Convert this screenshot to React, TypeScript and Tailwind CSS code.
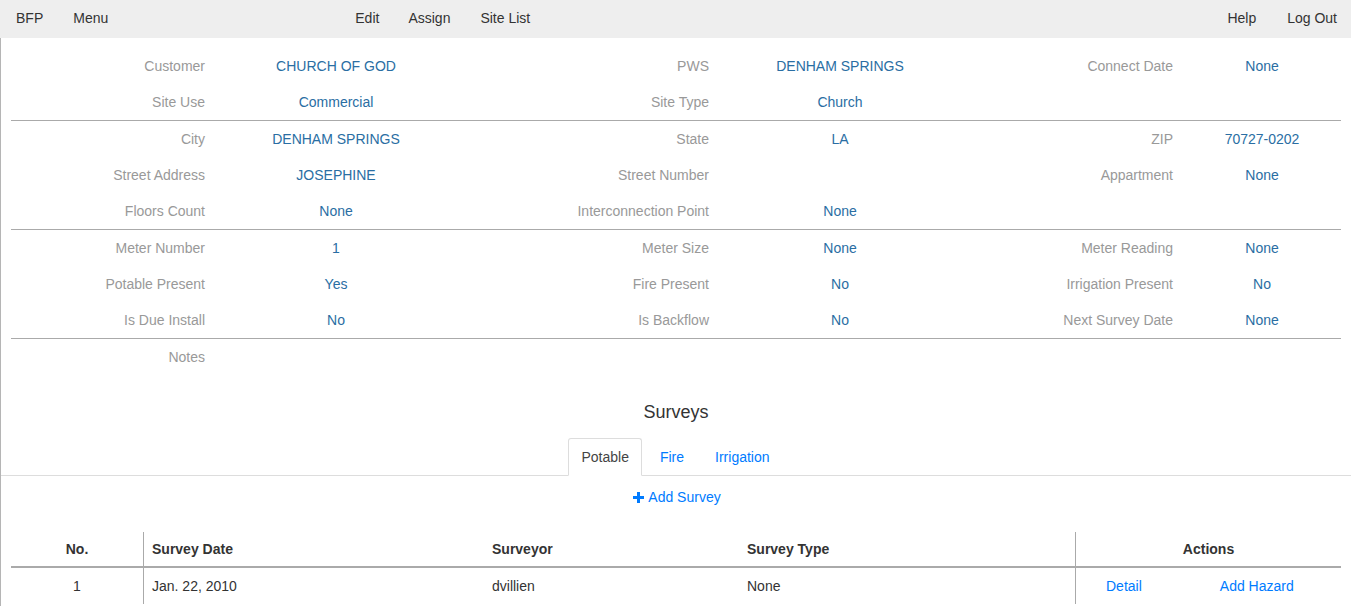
import React from "react";

const sections = [
  [
    ["Customer", "CHURCH OF GOD", "PWS", "DENHAM SPRINGS", "Connect Date", "None"],
    ["Site Use", "Commercial", "Site Type", "Church", "", ""],
  ],
  [
    ["City", "DENHAM SPRINGS", "State", "LA", "ZIP", "70727-0202"],
    ["Street Address", "JOSEPHINE", "Street Number", "", "Appartment", "None"],
    ["Floors Count", "None", "Interconnection Point", "None", "", ""],
  ],
  [
    ["Meter Number", "1", "Meter Size", "None", "Meter Reading", "None"],
    ["Potable Present", "Yes", "Fire Present", "No", "Irrigation Present", "No"],
    ["Is Due Install", "No", "Is Backflow", "No", "Next Survey Date", "None"],
  ],
  [["Notes", "", "", "", "", ""]],
];

const PlusIcon = () => (
  <svg width="11" height="11" viewBox="0 0 11 11" className="inline-block mr-[4px] -mt-[2px]">
    <rect x="4" y="0" width="3" height="11" fill="#007bff" />
    <rect x="0" y="4" width="11" height="3" fill="#007bff" />
  </svg>
);

const App = () => {
  return (
    <div className="min-h-screen bg-white text-[14px] text-[#333] font-['Liberation_Sans',Arial,sans-serif]">
      <div className="h-[38px] bg-[#eee] flex items-center pb-[2px] px-[16px]">
        <span>BFP</span>
        <span className="ml-[30px]">Menu</span>
        <span className="ml-[247px]">Edit</span>
        <span className="ml-[29px]">Assign</span>
        <span className="ml-[30px]">Site List</span>
        <span className="ml-auto">Help</span>
        <span className="ml-[31px] -mr-[2px]">Log Out</span>
      </div>

      <div className="border-l border-[#b5b5b5] pt-[10px] pb-[2px]">
        <div className="ml-[10px] mr-[10px]">
          {sections.map((rows, si) => (
            <div key={si} className={si > 0 ? "border-t border-[#aaa]" : ""}>
              {rows.map((row, ri) => (
                <div
                  key={ri}
                  className="grid grid-cols-[204px_242px_262px_242px_222px_158px] h-9 items-center"
                >
                  {row.map((cell, ci) =>
                    ci % 2 === 0 ? (
                      <div key={ci} className="text-right pr-[10px] text-[#999]">
                        {cell}
                      </div>
                    ) : (
                      <div key={ci} className="text-center text-[#2a6ea3]">
                        {cell}
                      </div>
                    )
                  )}
                </div>
              ))}
            </div>
          ))}
        </div>

        <h2 className="mt-[26px] text-center text-[18px] leading-[22px] text-[#333]">Surveys</h2>

        <div className="mt-[15px] border-b border-[#ddd] flex justify-center h-[38px]">
          <div className="flex pl-[2px]">
            <div className="h-[38px] px-[12px] pt-[1px] flex items-center border border-[#ddd] border-b-white rounded-t-[3px] bg-white text-[#444]">
              Potable
            </div>
            <div className="h-[37px] pt-[1px] pl-[18px] pr-[15px] flex items-center text-[#007bff]">Fire</div>
            <div className="h-[37px] pt-[1px] px-[16px] flex items-center text-[#007bff]">Irrigation</div>
          </div>
        </div>

        <div className="pt-[12px] pl-[2px] text-center text-[#007bff] leading-[18px]">
          <PlusIcon />
          Add Survey
        </div>

        <div className="ml-[10px] mr-[10px] mt-[26px]">
          <div className="grid grid-cols-[132px_340px_255px_337px_266px] h-9 items-center font-bold text-[#333] border-b-2 border-[#aaa]">
            <div className="text-center h-full flex items-center justify-center">No.</div>
            <div className="border-l border-[#aaa] h-full flex items-center pl-[8px]">Survey Date</div>
            <div className="pl-[9px]">Surveyor</div>
            <div className="pl-[9px]">Survey Type</div>
            <div className="border-l border-[#aaa] h-full flex items-center justify-center">Actions</div>
          </div>
          <div className="grid grid-cols-[132px_340px_255px_337px_266px] h-9 items-center text-[#333]">
            <div className="text-center">1</div>
            <div className="border-l border-[#aaa] h-full flex items-center pl-[8px]">Jan. 22, 2010</div>
            <div className="pl-[9px]">dvillien</div>
            <div className="pl-[9px]">None</div>
            <div className="border-l border-[#aaa] h-full flex items-center text-[#007bff]">
              <span className="ml-[30px]">Detail</span>
              <span className="ml-[78px]">Add Hazard</span>
            </div>
          </div>
        </div>
      </div>
    </div>
  );
};

export default App;
